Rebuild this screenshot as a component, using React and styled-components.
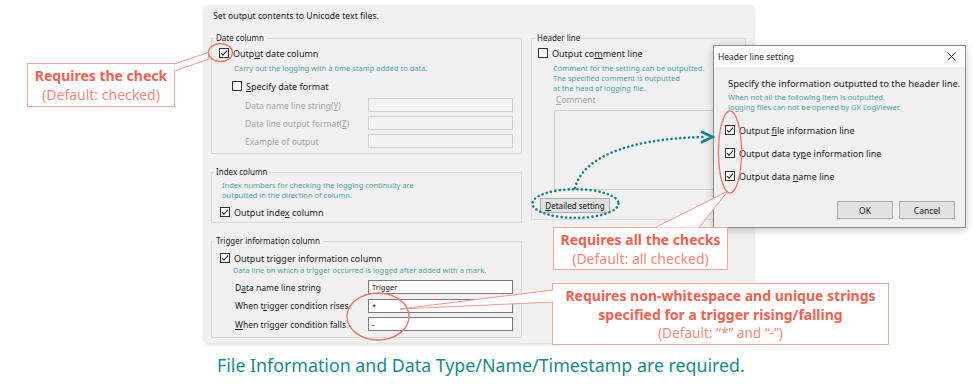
import React from 'react'
import styled, { createGlobalStyle } from 'styled-components'

const GlobalStyle = createGlobalStyle`
  html, body { margin: 0; padding: 0; background: #fff; }
  body { font-family: "Noto Sans", "Liberation Sans", sans-serif; }
`

const Page = styled.div`
  position: relative;
  width: 973px;
  height: 384px;
  overflow: hidden;
  background: #fff;
  padding: 6px 0 0 205px;
  box-sizing: border-box;
`

const Panel = styled.div`
  width: 548px;
  height: 337px;
  box-sizing: border-box;
  background: #f0f0f0;
  box-shadow: 0 1px 5px rgba(0, 0, 0, 0.18);
  padding: 4px 7px 0 6px;
  color: #1c1c1c;
`

const Title = styled.div`
  margin-left: 2px;
  font-size: 8.7px;
  line-height: 12px;
`

const Columns = styled.div`
  display: grid;
  grid-template-columns: 311px 215px;
  column-gap: 9px;
  align-items: start;
  margin-top: 16px;
`

const Column = styled.div`
  display: flex;
  flex-direction: column;
  gap: 18px;
`

const Group = styled.div`
  border: 1px solid #dadada;
  padding: 0 8px ${({ $bottom }) => $bottom}px 7px;
`

const Legend = styled.div`
  width: fit-content;
  margin: -7px 0 0 ${({ $left }) => $left}px;
  padding: 0 2px;
  background: #f0f0f0;
  font-size: 8px;
  line-height: 12px;
`

const CheckRow = styled.div`
  display: flex;
  align-items: center;
  gap: 4px;
  height: 14px;
  margin: ${({ $top }) => $top}px 0 0 ${({ $indent }) => $indent || 0}px;
  font-size: ${({ $size }) => $size || 9}px;
  white-space: nowrap;
`

const Box = styled.span`
  flex: none;
  width: 10px;
  height: 10px;
  box-sizing: border-box;
  border: 1px solid #333;
  background: #fff;
  display: flex;
  align-items: center;
  justify-content: center;
`

const Hint = styled.div`
  margin: ${({ $top }) => $top}px 0 0 ${({ $indent }) => $indent}px;
  font-size: 7.5px;
  line-height: ${({ $lh }) => $lh || 11}px;
  color: #4ba5a8;
  white-space: nowrap;
`

const Fields = styled.div`
  display: flex;
  flex-direction: column;
  gap: ${({ $gap }) => $gap}px;
  margin: ${({ $top }) => $top}px 0 0 ${({ $indent }) => $indent}px;
`

const FieldRow = styled.div`
  display: grid;
  grid-template-columns: ${({ $label }) => $label}px 1fr;
  align-items: center;
  height: 14px;
  font-size: 8.5px;
  color: ${({ $disabled }) => ($disabled ? '#a3a3a3' : '#1c1c1c')};
  white-space: nowrap;
`

const Input = styled.div`
  height: 14px;
  box-sizing: border-box;
  border: 1px solid ${({ $disabled }) => ($disabled ? '#cfcfcf' : '#7a7a7a')};
  background: ${({ $disabled }) => ($disabled ? '#f2f2f2' : '#fff')};
  padding-left: 3px;
  font-size: 7.5px;
  line-height: 12px;
  color: #111;
`

const U = styled.span`
  text-decoration: underline;
`

const CommentLabel = styled.div`
  margin: 1px 0 0 17px;
  font-size: 8.5px;
  line-height: 12px;
  color: #a3a3a3;
`

const CommentArea = styled.div`
  height: 80px;
  margin: 4px 0 0 15px;
  border: 1px solid #cfcfcf;
  box-sizing: border-box;
  background: #f0f0f0;
`

const Button = styled.div`
  width: ${({ $w }) => $w}px;
  height: ${({ $h }) => $h}px;
  box-sizing: border-box;
  margin: ${({ $top }) => $top || 0}px 0 0 ${({ $indent }) => $indent || 0}px;
  border: 1px solid #adadad;
  background: #e1e1e1;
  display: flex;
  align-items: center;
  justify-content: center;
  font-size: ${({ $size }) => $size}px;
  color: #111;
`

const Caption = styled.div`
  margin: 12px 0 0 12px;
  font-size: 17.8px;
  line-height: 20px;
  color: #178a90;
  white-space: nowrap;
`

const Dialog = styled.div`
  position: absolute;
  left: 713px;
  top: 45px;
  width: 253px;
  height: 183px;
  box-sizing: border-box;
  border: 1px solid #8c8c8c;
  background: #f0f0f0;
  box-shadow: 0 2px 8px rgba(0, 0, 0, 0.22);
  color: #1c1c1c;
`

const TitleBar = styled.div`
  height: 21px;
  background: #fff;
  display: flex;
  align-items: center;
  justify-content: space-between;
  padding: 0 9px 0 4px;
  font-size: 8.5px;
`

const DialogBody = styled.div`
  padding: 0 10px 0 11px;
`

const Heading = styled.div`
  margin: 10px 0 0 3px;
  font-size: 9.4px;
  line-height: 13px;
  white-space: nowrap;
`

const ButtonRow = styled.div`
  display: flex;
  justify-content: flex-end;
  gap: 6px;
  margin-top: 18px;
`

const Callout = styled.div`
  position: absolute;
  left: ${({ $x }) => $x}px;
  top: ${({ $y }) => $y}px;
  width: ${({ $w }) => $w}px;
  height: ${({ $h }) => $h}px;
  box-sizing: border-box;
  border: 1px solid #f4a699;
  background: #fff;
  display: flex;
  flex-direction: column;
  align-items: center;
  justify-content: center;
  white-space: nowrap;
`

const Strong = styled.div`
  font-size: 14px;
  line-height: 19px;
  font-weight: 700;
  color: #f1614f;
`

const Note = styled.div`
  font-size: ${({ $size }) => $size || 14}px;
  line-height: ${({ $lh }) => $lh || 19}px;
  color: #f3887a;
`

const Overlay = styled.svg`
  position: absolute;
  left: 0;
  top: 0;
  pointer-events: none;
`

const Check = ({ on }) => (
  <Box>
    {on && (
      <svg width="8" height="8" viewBox="0 0 8 8">
        <path d="M1 4.1 L3 6.2 L7 1.6" fill="none" stroke="#222" strokeWidth="1.1" />
      </svg>
    )}
  </Box>
)

const Close = () => (
  <svg width="9" height="9" viewBox="0 0 9 9">
    <path d="M0.5 0.5 L8.5 8.5 M8.5 0.5 L0.5 8.5" stroke="#222" strokeWidth="1" />
  </svg>
)

const pointers = [
  '174,64 208,52.5 209,59 174,71',
  '655,227.5 728,191 699,227.5',
  '553,290 400,309 553,302',
]

const Annotations = () => (
  <Overlay width="973" height="384" viewBox="0 0 973 384">
    {pointers.map((pts, i) => (
      <g key={i}>
        <polygon points={pts} fill="#fff" />
        <polyline points={pts} fill="none" stroke="#f2988a" strokeWidth="1" />
      </g>
    ))}
    <ellipse cx="220.5" cy="52.5" rx="12" ry="9" fill="none" stroke="#f07563" strokeWidth="1.3" />
    <ellipse cx="730" cy="152" rx="11.5" ry="41" fill="none" stroke="#f07563" strokeWidth="1.3" />
    <ellipse cx="378" cy="316.5" rx="31" ry="23.5" fill="none" stroke="#f07563" strokeWidth="1.3" />
    <ellipse
      cx="575.5"
      cy="203.5"
      rx="43"
      ry="14.3"
      fill="none"
      stroke="#11858e"
      strokeWidth="2.6"
      strokeDasharray="0.1 4.3"
      strokeLinecap="round"
    />
    <path
      d="M575 188 C582 160, 622 139, 703 137"
      fill="none"
      stroke="#11858e"
      strokeWidth="2.6"
      strokeDasharray="0.1 4.3"
      strokeLinecap="round"
    />
    <polyline points="701,131.5 712.5,137 701,142.5" fill="none" stroke="#11858e" strokeWidth="2.6" />
  </Overlay>
)

export default function App() {
  return (
    <Page>
      <GlobalStyle />
      <Panel>
        <Title>Set output contents to Unicode text files.</Title>
        <Columns>
          <Column>
            <Group $bottom={5}>
              <Legend $left={-5}>Date column</Legend>
              <CheckRow $top={2}>
                <Check on />
                <span>Outp<U>u</U>t date column</span>
              </CheckRow>
              <Hint $top={3} $indent={15}>Carry out the logging with a time stamp added to data.</Hint>
              <CheckRow $top={5} $indent={13}>
                <Check />
                <span><U>S</U>pecify date format</span>
              </CheckRow>
              <Fields $top={5} $indent={26} $gap={4}>
                <FieldRow $label={123} $disabled>
                  <span>Data name line string(<U>Y</U>)</span>
                  <Input $disabled />
                </FieldRow>
                <FieldRow $label={123} $disabled>
                  <span>Data line output format(<U>Z</U>)</span>
                  <Input $disabled />
                </FieldRow>
                <FieldRow $label={123} $disabled>
                  <span>Example of output</span>
                  <Input $disabled />
                </FieldRow>
              </Fields>
            </Group>

            <Group $bottom={3}>
              <Legend $left={-5}>Index column</Legend>
              <Hint $top={2} $indent={3} $lh={10}>
                Index numbers for checking the logging continuity are
                <br />
                outputted in the direction of column.
              </Hint>
              <CheckRow $top={5} $indent={1}>
                <Check on />
                <span>Output inde<U>x</U> column</span>
              </CheckRow>
            </Group>

            <Group $bottom={6}>
              <Legend $left={-5}>Trigger information column</Legend>
              <CheckRow $top={4} $indent={1}>
                <Check on />
                <span>Output trigger information column</span>
              </CheckRow>
              <Hint $top={0} $indent={14}>Data line on which a trigger occurred is logged after added with a mark.</Hint>
              <Fields $top={4} $indent={16} $gap={4.5}>
                <FieldRow $label={133}>
                  <span>D<U>a</U>ta name line string</span>
                  <Input>Trigger</Input>
                </FieldRow>
                <FieldRow $label={133}>
                  <span>When t<U>r</U>igger condition rises</span>
                  <Input>*</Input>
                </FieldRow>
                <FieldRow $label={133}>
                  <span><U>W</U>hen trigger condition falls</span>
                  <Input>-</Input>
                </FieldRow>
              </Fields>
            </Group>
          </Column>

          <Column>
            <Group $bottom={6}>
              <Legend $left={-4}>Header line</Legend>
              <CheckRow $top={2} $indent={-1}>
                <Check />
                <span>Output co<U>m</U>ment line</span>
              </CheckRow>
              <Hint $top={3} $indent={14} $lh={10}>
                Comment for the setting can be outputted.
                <br />
                The specified comment is outputted
                <br />
                at the head of logging file.
              </Hint>
              <CommentLabel><U>C</U>omment</CommentLabel>
              <CommentArea />
              <Button $w={70} $h={15} $top={8} $indent={1} $size={8}>
                <span><U>D</U>etailed setting</span>
              </Button>
            </Group>
          </Column>
        </Columns>
      </Panel>
      <Caption>File Information and Data Type/Name/Timestamp are required.</Caption>

      <Dialog>
        <TitleBar>
          <span>Header line setting</span>
          <Close />
        </TitleBar>
        <DialogBody>
          <Heading>Specify the information outputted to the header line.</Heading>
          <Hint $top={2} $indent={3} $lh={10}>
            When not all the following item is outputted,
            <br />
            logging files can not be opened by GX LogViewer.
          </Hint>
          <CheckRow $top={11} $size={9}>
            <Check on />
            <span>Output <U>f</U>ile information line</span>
          </CheckRow>
          <CheckRow $top={9} $size={9}>
            <Check on />
            <span>Output data ty<U>p</U>e information line</span>
          </CheckRow>
          <CheckRow $top={9} $size={9}>
            <Check on />
            <span>Output data <U>n</U>ame line</span>
          </CheckRow>
          <ButtonRow>
            <Button $w={56} $h={18} $size={8.5}>OK</Button>
            <Button $w={56} $h={18} $size={8.5}>Cancel</Button>
          </ButtonRow>
        </DialogBody>
      </Dialog>

      <Callout $x={27} $y={63} $w={148} $h={44}>
        <Strong>Requires the check</Strong>
        <Note>(Default: checked)</Note>
      </Callout>
      <Callout $x={553} $y={227} $w={175} $h={43}>
        <Strong>Requires all the checks</Strong>
        <Note>(Default: all checked)</Note>
      </Callout>
      <Callout $x={552} $y={283} $w={337} $h={62}>
        <Strong>Requires non-whitespace and unique strings</Strong>
        <Strong>specified for a trigger rising/falling</Strong>
        <Note $size={13.6} $lh={18}>(Default: “*” and “-”)</Note>
      </Callout>

      <Annotations />
    </Page>
  )
}
